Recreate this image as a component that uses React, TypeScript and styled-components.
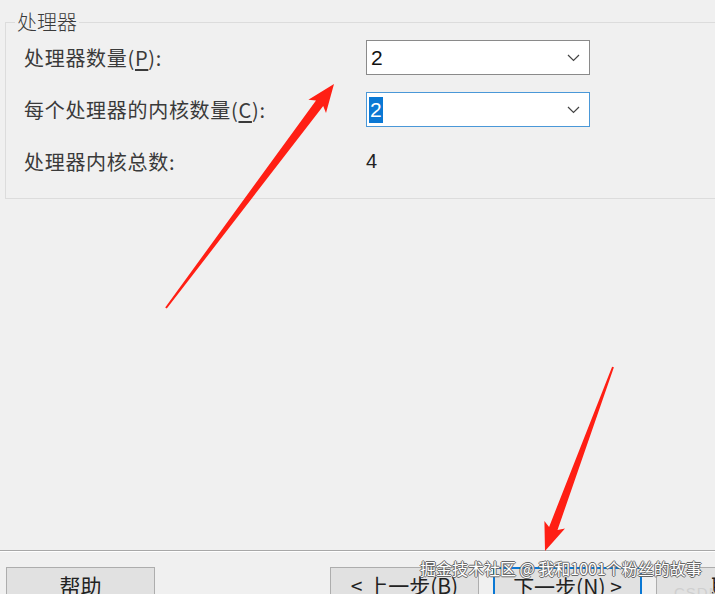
import React from "react";
import styled, { createGlobalStyle } from "styled-components";

const Global = createGlobalStyle`
  html, body { margin: 0; padding: 0; background: #f0f0f0; }
  body { font-family: "Noto Sans CJK SC", "Noto Sans", sans-serif; }
`;

const Page = styled.div`
  position: relative;
  width: 715px;
  height: 594px;
  overflow: hidden;
  background: #f0f0f0;
  display: flex;
  flex-direction: column;
  color: #333;
`;

const Group = styled.fieldset`
  margin: 10px -20px 0 5px;
  padding: 6px 0 19px 18px;
  border: 1px solid #dcdcdc;
  min-width: 0;
`;

const Legend = styled.legend`
  margin-left: -9px;
  padding: 0 2px;
  font-size: 20px;
  line-height: 24px;
  color: #3a3a3a;
  font-weight: 300;
`;

const Grid = styled.div`
  display: grid;
  grid-template-columns: 342px 224px;
  grid-auto-rows: 35px;
  row-gap: 17px;
  align-items: center;
`;

const Label = styled.div`
  font-size: 20px;
  line-height: 24px;
  color: #3a3a3a;
  white-space: nowrap;
  letter-spacing: 0.7px;
`;

const Key = styled.span`
  text-decoration: underline;
  text-underline-offset: 3px;
`;

const Combo = styled.div<{ $focused?: boolean }>`
  box-sizing: border-box;
  height: 35px;
  background: #fff;
  border: 1px solid ${(p) => (p.$focused ? "#4a98d8" : "#8a8a8a")};
  display: flex;
  align-items: center;
  justify-content: space-between;
  padding: 0 9px 0 2px;
`;

const Value = styled.span<{ $selected?: boolean }>`
  font-family: "Liberation Sans", Arial, sans-serif;
  font-size: 21px;
  line-height: 26px;
  padding: 0 1px;
  margin-left: ${(p) => (p.$selected ? "0" : "1px")};
  color: ${(p) => (p.$selected ? "#fff" : "#111")};
  background: ${(p) => (p.$selected ? "#0a78d4" : "transparent")};
`;

const PlainValue = styled.span`
  font-family: "Liberation Sans", Arial, sans-serif;
  font-size: 20px;
  color: #222;
`;

const Spacer = styled.div`
  flex: 1;
`;

const Footer = styled.div`
  box-sizing: border-box;
  flex: none;
  border-top: 1px solid #a8a8a8;
  box-shadow: inset 0 1px 0 #fff;
  height: 44px;
  display: flex;
  align-items: flex-start;
  padding: 16px 0 0 6px;
`;

const Button = styled.div<{ $primary?: boolean; $ml?: number; $w?: number }>`
  box-sizing: border-box;
  flex: none;
  width: ${(p) => p.$w ?? 149}px;
  height: 36px;
  margin-left: ${(p) => p.$ml ?? 0}px;
  background: #e1e1e1;
  border: ${(p) => (p.$primary ? "2px solid #0a78d4" : "1px solid #adadad")};
  font-size: 21px;
  line-height: 34px;
  color: #222;
  text-align: center;
  white-space: nowrap;
  overflow: hidden;
`;

const CutButton = styled(Button)`
  text-align: left;
  padding-left: 54px;
`;

const Watermark = styled.div`
  position: absolute;
  left: 420px;
  top: 558px;
  font-size: 16px;
  line-height: 20px;
  color: #fff;
  white-space: nowrap;
  text-shadow: 1px 0 0 #666, -1px 0 0 #666, 0 1px 0 #666, 0 -1px 0 #666;
`;

const Csdn = styled.div`
  position: absolute;
  left: 674px;
  top: 584px;
  font-family: "Liberation Sans", Arial, sans-serif;
  font-size: 15px;
  color: #cfcfcf;
  letter-spacing: 1px;
`;

const Overlay = styled.svg`
  position: absolute;
  left: 0;
  top: 0;
  pointer-events: none;
`;

const Chevron = () => (
  <svg width="13" height="8" viewBox="0 0 13 8">
    <path d="M1 1 L6.5 6.5 L12 1" fill="none" stroke="#444" strokeWidth="1.2" />
  </svg>
);

function arrowPoints(
  tx: number, ty: number, px: number, py: number,
  w0: number, w1: number, L: number, W: number, back: number
) {
  const dx = px - tx, dy = py - ty;
  const len = Math.hypot(dx, dy);
  const ux = dx / len, uy = dy / len;
  const nx = -uy, ny = ux;
  const bx = px - ux * L, by = py - uy * L;
  const bbx = bx - ux * back, bby = by - uy * back;
  const pts = [
    [tx + nx * w0 / 2, ty + ny * w0 / 2],
    [bx + nx * w1 / 2, by + ny * w1 / 2],
    [bbx + nx * W / 2, bby + ny * W / 2],
    [px, py],
    [bbx - nx * W / 2, bby - ny * W / 2],
    [bx - nx * w1 / 2, by - ny * w1 / 2],
    [tx - nx * w0 / 2, ty - ny * w0 / 2],
  ];
  return pts.map((p) => p.map((v) => v.toFixed(1)).join(",")).join(" ");
}

export default function App() {
  return (
    <>
      <Global />
      <Page>
        <Group>
          <Legend>处理器</Legend>
          <Grid>
            <Label>
              处理器数量(<Key>P</Key>):
            </Label>
            <Combo>
              <Value>2</Value>
              <Chevron />
            </Combo>
            <Label>
              每个处理器的内核数量(<Key>C</Key>):
            </Label>
            <Combo $focused>
              <Value $selected>2</Value>
              <Chevron />
            </Combo>
            <Label>处理器内核总数:</Label>
            <PlainValue>4</PlainValue>
          </Grid>
        </Group>
        <Spacer />
        <Footer>
          <Button>帮助</Button>
          <Button $ml={175}>&lt; 上一步(B)</Button>
          <Button $primary $ml={14}>下一步(N) &gt;</Button>
          <CutButton $ml={14} $w={120}>取消</CutButton>
        </Footer>
        <Watermark>掘金技术社区 @ 我和1001个粉丝的故事</Watermark>
        <Csdn>CSDN</Csdn>
        <Overlay width="715" height="594" viewBox="0 0 715 594">
          <polygon
            fill="#ff1f14"
            points={arrowPoints(166, 308, 334, 84, 2, 9, 24, 22, 4)}
          />
          <polygon
            fill="#ff1f14"
            points={arrowPoints(613, 367, 545, 551, 2, 9, 24, 22, 4)}
          />
        </Overlay>
      </Page>
    </>
  );
}
